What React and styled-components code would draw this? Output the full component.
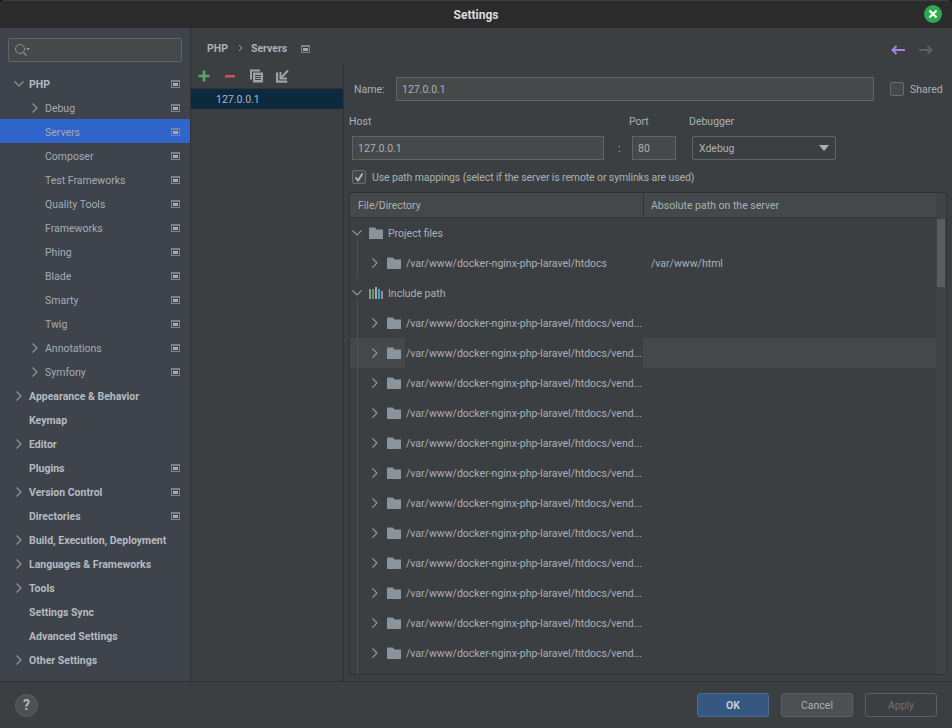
import styled, { createGlobalStyle } from "styled-components";

const GlobalStyle = createGlobalStyle`
  html, body {
    margin: 0;
    padding: 0;
    background: #1d1d1d;
  }
  * { box-sizing: border-box; }
`;

const Window = styled.div`
  width: 952px;
  height: 728px;
  display: flex;
  flex-direction: column;
  overflow: hidden;
  border-radius: 5px 5px 0 0;
  background: #3c3f41;
  color: #a9b0b6;
  font-family: Roboto, "Noto Sans", sans-serif;
  font-size: 10.5px;
`;

const TitleBar = styled.header`
  position: relative;
  height: 28px;
  flex: none;
  display: flex;
  align-items: center;
  justify-content: center;
  background: #2b2b2b;
  border-top: 1px solid #3d3d3d;
  color: #dcdcdc;
  font-size: 12px;
  font-weight: 700;
`;

const CloseButton = styled.button`
  position: absolute;
  right: 10px;
  top: 4px;
  width: 18px;
  height: 18px;
  padding: 0;
  border: 0;
  border-radius: 50%;
  background: #2dab4f;
  display: flex;
  align-items: center;
  justify-content: center;
`;

const Body = styled.div`
  flex: 1;
  min-height: 0;
  display: flex;
`;

const Sidebar = styled.aside`
  width: 191px;
  flex: none;
  background: #3e434c;
  border-right: 1px solid #2f3133;
  padding-top: 10px;
`;

const SearchBox = styled.div`
  height: 24px;
  margin: 0 8px 9px;
  width: 174px;
  display: flex;
  align-items: center;
  padding-left: 5px;
  background: #45494a;
  border: 1px solid #646464;
  border-radius: 2px;
`;

const NavRow = styled.div`
  height: 24px;
  display: flex;
  align-items: center;
  padding-left: ${(p) => (p.$depth === 1 ? 29 : 13)}px;
  padding-right: 10px;
  padding-top: 2px;
  background: ${(p) => (p.$selected ? "#2f65ca" : "transparent")};
  color: ${(p) => (p.$top ? "#b4bac0" : "#a5abb1")};
  font-weight: ${(p) => (p.$top ? 700 : 400)};
`;

const NavArrow = styled.span`
  width: 16px;
  flex: none;
  display: flex;
  align-items: center;
`;

const NavLabel = styled.span`
  flex: 1;
  white-space: nowrap;
`;

const Main = styled.main`
  flex: 1;
  min-width: 0;
  display: flex;
  flex-direction: column;
`;

const Breadcrumb = styled.div`
  height: 36px;
  flex: none;
  display: flex;
  align-items: center;
  padding: 4px 19px 0 16px;
  font-weight: 700;
  color: #a9b0b6;
`;

const CrumbSep = styled.span`
  display: flex;
  margin: 0 7px 0 10px;
`;

const CrumbIcon = styled.span`
  display: flex;
  margin-left: 14px;
  margin-top: 1px;
`;

const HistoryNav = styled.div`
  margin-left: auto;
  margin-top: 3px;
  display: flex;
  gap: 14px;
`;

const Split = styled.div`
  flex: 1;
  min-height: 0;
  display: flex;
`;

const ListPane = styled.section`
  width: 153px;
  flex: none;
  border-right: 1px solid #2f3133;
`;

const ListToolbar = styled.div`
  height: 25px;
  display: flex;
  align-items: center;
  gap: 10px;
  padding-left: 5px;
  border-bottom: 1px solid #323232;
`;

const ToolIcon = styled.span`
  width: 16px;
  height: 16px;
  display: flex;
`;

const ListItem = styled.div`
  height: 20px;
  display: flex;
  align-items: center;
  padding-left: 25px;
  background: #0d293e;
  color: #a9b7c6;
`;

const FormPane = styled.section`
  flex: 1;
  min-width: 0;
  display: flex;
  flex-direction: column;
  padding: 13px 5px 6px 6px;
`;

const NameRow = styled.div`
  display: flex;
  align-items: center;
  height: 24px;
  padding-left: 4px;
`;

const NameLabel = styled.label`
  width: 42px;
  flex: none;
`;

const TextInput = styled.div`
  height: 24px;
  width: ${(p) => p.$width}px;
  flex: none;
  display: flex;
  align-items: center;
  padding-left: 5px;
  background: #45494a;
  border: 1px solid #646464;
  color: #a9b0b6;
`;

const SharedBox = styled.label`
  display: flex;
  align-items: center;
  gap: 6px;
  margin-left: 16px;
`;

const CheckBox = styled.span`
  width: 14px;
  height: 14px;
  flex: none;
  display: flex;
  align-items: center;
  justify-content: center;
  background: #43494a;
  border: 1px solid #6b6b6b;
  border-radius: 2px;
`;

const ConnectionRow = styled.div`
  display: grid;
  grid-template-columns: 280px 60px auto;
  margin-top: 13px;
  margin-left: -1px;
`;

const FieldLabel = styled.div`
  height: 22px;
  padding-top: 1px;
`;

const FieldBody = styled.div`
  display: flex;
  align-items: center;
  padding-left: 3px;
`;

const Colon = styled.span`
  margin-left: 14px;
`;

const Select = styled.div`
  width: 144px;
  height: 24px;
  display: flex;
  align-items: center;
  justify-content: space-between;
  padding: 0 6px;
  background: #3c3f41;
  border: 1px solid #646464;
  border-radius: 2px;
`;

const MappingsToggle = styled.label`
  display: flex;
  align-items: center;
  gap: 6px;
  height: 14px;
  margin: 10px 0 8px 2px;
  letter-spacing: -0.12px;
`;

const Table = styled.div`
  flex: 1;
  min-height: 0;
  display: flex;
  margin-left: -1px;
  border: 1px solid #2f3133;
  overflow: hidden;
`;

const TableMain = styled.div`
  flex: 1;
  min-width: 0;
  display: flex;
  flex-direction: column;
`;

const TableHead = styled.div`
  height: 25px;
  flex: none;
  display: grid;
  grid-template-columns: 293px 1fr;
  background: #45484a;
  border-bottom: 1px solid #323232;
`;

const HeadCell = styled.div`
  display: flex;
  align-items: center;
  padding-left: ${(p) => (p.$first ? 8 : 7)}px;
  margin: 1px 0;
  border-left: ${(p) => (p.$first ? "0" : "1px solid #323232")};
`;

const Group = styled.div`
  position: relative;
  flex: ${(p) => (p.$grow ? 1 : "none")};

  &::before {
    content: "";
    position: absolute;
    left: 7px;
    top: 21px;
    bottom: 0;
    width: 1px;
    background: #4f5254;
    z-index: 1;
  }
`;

const TreeRow = styled.div`
  height: 30px;
  display: grid;
  grid-template-columns: 293px 1fr;
  align-items: stretch;
  background: ${(p) => (p.$hover ? "#45484a" : "transparent")};
`;

const NameCell = styled.div`
  min-width: 0;
  display: flex;
  align-items: center;
  padding-left: ${(p) => (p.$child ? 19 : 1)}px;
`;

const Expander = styled.span`
  width: 18px;
  flex: none;
  display: flex;
  align-items: center;
`;

const RowIcon = styled.span`
  width: 18px;
  flex: none;
  display: flex;
  align-items: center;
`;

const RowText = styled.span`
  flex: 1;
  min-width: 0;
  height: 30px;
  line-height: 31px;
  padding-left: 1px;
  white-space: nowrap;
  overflow: hidden;
  background: #3c3f41;
`;

const PathCell = styled.div`
  display: flex;
  align-items: center;
  padding-left: 8px;
`;

const ScrollTrack = styled.div`
  width: 10px;
  flex: none;
  background: #404345;
  padding: 26px 1px 0;
`;

const ScrollThumb = styled.div`
  height: 68px;
  background: #5a5d5f;
`;

const Footer = styled.footer`
  height: 47px;
  flex: none;
  display: flex;
  align-items: center;
  padding: 0 15px;
  border-top: 1px solid #2f3133;
`;

const HelpButton = styled.span`
  width: 23px;
  height: 23px;
  display: flex;
  align-items: center;
  justify-content: center;
  border-radius: 50%;
  background: #4d5052;
  border: 1px solid #5e6163;
  color: #b3b7ba;
  font-size: 14px;
  font-weight: 700;
`;

const Buttons = styled.div`
  margin-left: auto;
  display: flex;
  gap: 12px;
`;

const Button = styled.button`
  width: 72px;
  height: 24px;
  padding: 0;
  border-radius: 3px;
  font: inherit;
  font-weight: ${(p) => (p.$primary ? 700 : 400)};
  color: ${(p) => (p.$primary ? "#c5ccd3" : p.disabled ? "#6e7072" : "#a9b0b6")};
  background: ${(p) => (p.$primary ? "#365880" : p.disabled ? "transparent" : "#4c5052")};
  border: 1px solid ${(p) => (p.$primary ? "#4c708c" : "#5e6060")};
`;

function ProjectIcon() {
  return (
    <svg width="9" height="8" viewBox="0 0 9 8">
      <rect x="0.5" y="0.5" width="8" height="7" fill="none" stroke="#7c848a" />
      <rect x="0" y="0" width="9" height="2" fill="#7c848a" />
      <rect x="2" y="3" width="5" height="3" fill="#a3aab0" />
    </svg>
  );
}

function Chevron({ open }) {
  return (
    <svg width="12" height="12" viewBox="0 0 12 12">
      <path
        d={open ? "M1.5 3.5L6 8l4.500-4.500" : "M3.500 1.500L8 6l-4.500 4.500"}
        fill="none"
        stroke="#8f969b"
        strokeWidth="1.2"
      />
    </svg>
  );
}

function Folder() {
  return (
    <svg width="14" height="12" viewBox="0 0 14 12">
      <path d="M0 0.5h6l1.500 2H14V12H0z" fill="#8a949c" />
    </svg>
  );
}

function LibraryBars() {
  return (
    <svg width="15" height="12" viewBox="0 0 15 12">
      <rect x="0" y="2" width="2" height="10" fill="#8a949c" />
      <rect x="3" y="2" width="2" height="10" fill="#5fa04a" />
      <rect x="6" y="0" width="2" height="12" fill="#a3abb1" />
      <rect x="9" y="2" width="2" height="10" fill="#3fa5d8" />
      <rect x="12" y="4" width="2" height="8" fill="#8a949c" />
    </svg>
  );
}

const nav = [
  { label: "PHP", top: true, open: true, project: true },
  { label: "Debug", depth: 1, arrow: true, project: true },
  { label: "Servers", depth: 1, selected: true, project: true },
  { label: "Composer", depth: 1, project: true },
  { label: "Test Frameworks", depth: 1, project: true },
  { label: "Quality Tools", depth: 1, project: true },
  { label: "Frameworks", depth: 1, project: true },
  { label: "Phing", depth: 1, project: true },
  { label: "Blade", depth: 1, project: true },
  { label: "Smarty", depth: 1, project: true },
  { label: "Twig", depth: 1, project: true },
  { label: "Annotations", depth: 1, arrow: true, project: true },
  { label: "Symfony", depth: 1, arrow: true, project: true },
  { label: "Appearance & Behavior", top: true, arrow: true },
  { label: "Keymap", top: true },
  { label: "Editor", top: true, arrow: true },
  { label: "Plugins", top: true, project: true },
  { label: "Version Control", top: true, arrow: true, project: true },
  { label: "Directories", top: true, project: true },
  { label: "Build, Execution, Deployment", top: true, arrow: true },
  { label: "Languages & Frameworks", top: true, arrow: true },
  { label: "Tools", top: true, arrow: true },
  { label: "Settings Sync", top: true },
  { label: "Advanced Settings", top: true },
  { label: "Other Settings", top: true, arrow: true },
];

const vendorPath = "/var/www/docker-nginx-php-laravel/htdocs/vend...";

export default function App() {
  return (
    <Window>
      <GlobalStyle />
      <TitleBar>
        Settings
        <CloseButton aria-label="Close">
          <svg width="10" height="10" viewBox="0 0 10 10">
            <path d="M1.500 1.500l7 7M8.500 1.500l-7 7" stroke="#fff" strokeWidth="2.2" />
          </svg>
        </CloseButton>
      </TitleBar>
      <Body>
        <Sidebar>
          <SearchBox>
            <svg width="18" height="14" viewBox="0 0 18 14">
              <circle cx="6" cy="6" r="4.500" fill="none" stroke="#8b9298" />
              <path d="M9.500 9.500l3 3" stroke="#8b9298" strokeWidth="1.300" />
              <path d="M12 5h4l-2 2.400z" fill="#8b9298" />
            </svg>
          </SearchBox>
          {nav.map((item) => (
            <NavRow key={item.label} $depth={item.depth} $top={item.top} $selected={item.selected}>
              <NavArrow>
                {(item.arrow || item.open) && <Chevron open={item.open} />}
              </NavArrow>
              <NavLabel>{item.label}</NavLabel>
              {item.project && <ProjectIcon />}
            </NavRow>
          ))}
        </Sidebar>
        <Main>
          <Breadcrumb>
            PHP
            <CrumbSep>
              <svg width="6" height="8" viewBox="0 0 6 8">
                <path d="M1 1l3 3-3 3" fill="none" stroke="#9da3a8" />
              </svg>
            </CrumbSep>
            Servers
            <CrumbIcon>
              <ProjectIcon />
            </CrumbIcon>
            <HistoryNav>
              <svg width="14" height="10" viewBox="0 0 14 10">
                <path d="M14 5H2M5.500 1L1.500 5l4 4" fill="none" stroke="#a782e6" strokeWidth="2" />
              </svg>
              <svg width="14" height="10" viewBox="0 0 14 10">
                <path d="M0 5h12M8.500 1l4 4-4 4" fill="none" stroke="#5c5f61" strokeWidth="2" />
              </svg>
            </HistoryNav>
          </Breadcrumb>
          <Split>
            <ListPane>
              <ListToolbar>
                <ToolIcon>
                  <svg width="16" height="16" viewBox="0 0 16 16">
                    <path d="M6.700 2.500h2.600v4.200h4.200v2.600H9.300v4.200H6.700V9.300H2.500V6.700h4.200z" fill="#59a869" />
                  </svg>
                </ToolIcon>
                <ToolIcon>
                  <svg width="16" height="16" viewBox="0 0 16 16">
                    <rect x="3" y="7" width="10" height="2.500" fill="#c75450" />
                  </svg>
                </ToolIcon>
                <ToolIcon>
                  <svg width="16" height="16" viewBox="0 0 16 16">
                    <path d="M2 1.500h10v2H4v8H2z" fill="#9da3a8" />
                    <path d="M5 4.500h10v10H5z" fill="#9da3a8" />
                    <path d="M7 7.500h6M7 9.500h6M7 11.500h6" stroke="#3c3f41" />
                  </svg>
                </ToolIcon>
                <ToolIcon>
                  <svg width="16" height="16" viewBox="0 0 16 16">
                    <path d="M2 4.500h2.200v8h9v2.200H2z" fill="#9da3a8" />
                    <path d="M6.500 4v6.500H13M6.500 10.500l7.500-8" fill="none" stroke="#9da3a8" strokeWidth="2" />
                  </svg>
                </ToolIcon>
              </ListToolbar>
              <ListItem>127.0.0.1</ListItem>
            </ListPane>
            <FormPane>
              <NameRow>
                <NameLabel>Name:</NameLabel>
                <TextInput $width={478}>127.0.0.1</TextInput>
                <SharedBox>
                  <CheckBox />
                  Shared
                </SharedBox>
              </NameRow>
              <ConnectionRow>
                <FieldLabel>Host</FieldLabel>
                <FieldLabel>Port</FieldLabel>
                <FieldLabel>Debugger</FieldLabel>
                <FieldBody>
                  <TextInput $width={252}>127.0.0.1</TextInput>
                  <Colon>:</Colon>
                </FieldBody>
                <FieldBody>
                  <TextInput $width={44}>80</TextInput>
                </FieldBody>
                <FieldBody>
                  <Select>
                    Xdebug
                    <svg width="10" height="6" viewBox="0 0 10 6">
                      <path d="M0 0h10L5 6z" fill="#a9b0b6" />
                    </svg>
                  </Select>
                </FieldBody>
              </ConnectionRow>
              <MappingsToggle>
                <CheckBox>
                  <svg width="12" height="12" viewBox="0 0 12 12">
                    <path d="M2.500 6.500l2.500 3 4.500-7" fill="none" stroke="#b5b9bc" strokeWidth="1.800" />
                  </svg>
                </CheckBox>
                Use path mappings (select if the server is remote or symlinks are used)
              </MappingsToggle>
              <Table>
                <TableMain>
                  <TableHead>
                    <HeadCell $first>File/Directory</HeadCell>
                    <HeadCell>Absolute path on the server</HeadCell>
                  </TableHead>
                  <Group>
                    <TreeRow>
                      <NameCell>
                        <Expander><Chevron open /></Expander>
                        <RowIcon><Folder /></RowIcon>
                        <RowText>Project files</RowText>
                      </NameCell>
                    </TreeRow>
                    <TreeRow>
                      <NameCell $child>
                        <Expander><Chevron /></Expander>
                        <RowIcon><Folder /></RowIcon>
                        <RowText>/var/www/docker-nginx-php-laravel/htdocs</RowText>
                      </NameCell>
                      <PathCell>/var/www/html</PathCell>
                    </TreeRow>
                  </Group>
                  <Group $grow>
                    <TreeRow>
                      <NameCell>
                        <Expander><Chevron open /></Expander>
                        <RowIcon><LibraryBars /></RowIcon>
                        <RowText>Include path</RowText>
                      </NameCell>
                    </TreeRow>
                    {Array.from({ length: 12 }, (_, i) => (
                      <TreeRow key={i} $hover={i === 1}>
                        <NameCell $child>
                          <Expander><Chevron /></Expander>
                          <RowIcon><Folder /></RowIcon>
                          <RowText>{vendorPath}</RowText>
                        </NameCell>
                      </TreeRow>
                    ))}
                  </Group>
                </TableMain>
                <ScrollTrack>
                  <ScrollThumb />
                </ScrollTrack>
              </Table>
            </FormPane>
          </Split>
        </Main>
      </Body>
      <Footer>
        <HelpButton>?</HelpButton>
        <Buttons>
          <Button $primary>OK</Button>
          <Button>Cancel</Button>
          <Button disabled>Apply</Button>
        </Buttons>
      </Footer>
    </Window>
  );
}
